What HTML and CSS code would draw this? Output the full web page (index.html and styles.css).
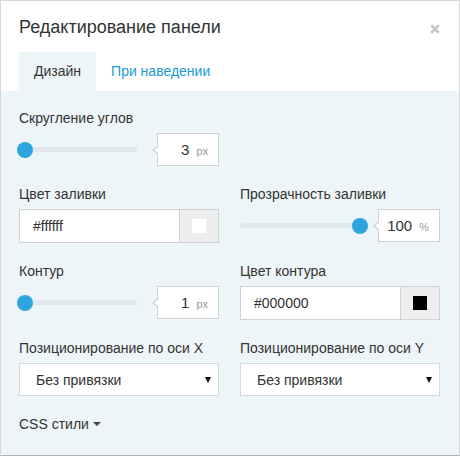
FILE: index.html
```html
<!DOCTYPE html>
<html lang="ru">
<head>
<meta charset="utf-8">
<title>Редактирование панели</title>
<link rel="stylesheet" href="styles.css">
</head>
<body>
<div class="panel">
  <div class="header">
    <h1 class="title">Редактирование панели</h1>
    <span class="close" aria-label="Закрыть">
      <svg width="10" height="10" viewBox="0 0 10 10"><path d="M1.2 1.2 L8.8 8.8 M8.8 1.2 L1.2 8.8" stroke="#c6c6c6" stroke-width="2.6" stroke-linecap="butt"/></svg>
    </span>
  </div>
  <div class="tabs">
    <div class="tab active">Дизайн</div>
    <div class="tab">При наведении</div>
  </div>
  <div class="body">
    <div class="grid">
      <div class="field">
        <div class="label">Скругление углов</div>
        <div class="range-row">
          <div class="slider"><div class="track"></div><div class="thumb at-min"></div></div>
          <div class="value"><span class="num">3</span><span class="unit">px</span></div>
        </div>
      </div>
      <div class="field"></div>

      <div class="field">
        <div class="label">Цвет заливки</div>
        <div class="color-input">
          <div class="color-text">#ffffff</div>
          <div class="swatch-cell"><span class="swatch white"></span></div>
        </div>
      </div>
      <div class="field">
        <div class="label">Прозрачность заливки</div>
        <div class="range-row">
          <div class="slider"><div class="track"></div><div class="thumb at-max"></div></div>
          <div class="value"><span class="num">100</span><span class="unit">%</span></div>
        </div>
      </div>

      <div class="field">
        <div class="label">Контур</div>
        <div class="range-row">
          <div class="slider"><div class="track"></div><div class="thumb at-min"></div></div>
          <div class="value"><span class="num">1</span><span class="unit">px</span></div>
        </div>
      </div>
      <div class="field">
        <div class="label">Цвет контура</div>
        <div class="color-input">
          <div class="color-text">#000000</div>
          <div class="swatch-cell"><span class="swatch black"></span></div>
        </div>
      </div>

      <div class="field">
        <div class="label">Позиционирование по оси X</div>
        <div class="select"><span>Без привязки</span><span class="arrow"></span></div>
      </div>
      <div class="field">
        <div class="label">Позиционирование по оси Y</div>
        <div class="select"><span>Без привязки</span><span class="arrow"></span></div>
      </div>
    </div>
    <div class="css-toggle">CSS стили <span class="caret"></span></div>
  </div>
</div>
</body>
</html>
```

FILE: styles.css
```css
* { box-sizing: border-box; }

html, body {
  margin: 0;
  padding: 0;
  background: #ffffff;
}

body {
  font-family: "Liberation Sans", Arial, sans-serif;
  color: #333333;
}

.panel {
  width: 460px;
  height: 456px;
  border: 1px solid #d3d7d9;
  border-bottom-color: #b0b4b6;
  display: flex;
  flex-direction: column;
  background: #ffffff;
}

.header {
  display: flex;
  align-items: flex-start;
  justify-content: space-between;
  padding: 14px 18px 0 18px;
}

.title {
  margin: 0;
  font-size: 18px;
  line-height: 24px;
  font-weight: normal;
  color: #333333;
}

.close {
  display: flex;
  margin-top: 9px;
  margin-right: 1px;
}

.tabs {
  display: flex;
  margin-top: 13px;
  padding: 0 18px;
  height: 39px;
}

.tab {
  padding: 0 15px;
  font-size: 14px;
  line-height: 39px;
  color: #1a9ad6;
  background: #ffffff;
}

.tab.active {
  color: #333333;
  background: #eef5f8;
}

.body {
  flex: 1;
  background: #eef5f8;
  padding: 17px 18px 0 18px;
}

.grid {
  display: grid;
  grid-template-columns: 200px 200px;
  column-gap: 21px;
  row-gap: 18px;
}

.label {
  font-size: 14px;
  line-height: 20px;
  color: #333333;
  margin-bottom: 5px;
  white-space: nowrap;
}

.range-row {
  display: flex;
  align-items: center;
  height: 33px;
}

.slider {
  position: relative;
  flex: 1;
  height: 16px;
  display: flex;
  align-items: center;
  margin-right: 10px;
}

.track {
  width: 118px;
  height: 5px;
  border-radius: 3px;
  background: #e2e9ec;
}

.thumb {
  position: absolute;
  top: 0;
  width: 16px;
  height: 16px;
  border-radius: 50%;
  background: #2ea5df;
}

.thumb.at-min { left: -2px; }
.thumb.at-max { right: 0; }

.value {
  position: relative;
  width: 62px;
  height: 33px;
  background: #ffffff;
  border: 1px solid #cfd3d5;
  display: flex;
  justify-content: flex-end;
  align-items: baseline;
  padding: 7px 10px 0 0;
}

.value::before,
.value::after {
  content: "";
  position: absolute;
  top: 50%;
  width: 0;
  height: 0;
  border-style: solid;
  border-color: transparent;
}

.value::before {
  left: -6px;
  margin-top: -5px;
  border-width: 5px 6px 5px 0;
  border-right-color: #cfd3d5;
}

.value::after {
  left: -4px;
  margin-top: -4px;
  border-width: 4px 5px 4px 0;
  border-right-color: #ffffff;
}

.num {
  font-size: 15px;
  color: #333333;
}

.unit {
  font-size: 11px;
  color: #999999;
  margin-left: 7px;
}

.color-input {
  display: flex;
  height: 34px;
  border: 1px solid #cfd3d5;
  background: #ffffff;
}

.color-text {
  flex: 1;
  font-size: 14px;
  line-height: 32px;
  padding-left: 13px;
  color: #333333;
}

.swatch-cell {
  width: 39px;
  border-left: 1px solid #cfd3d5;
  background: #eeeeee;
  display: flex;
  align-items: center;
  justify-content: center;
}

.swatch {
  width: 14px;
  height: 14px;
}

.swatch.white { background: #ffffff; }
.swatch.black { background: #000000; }

.select {
  height: 33px;
  border: 1px solid #d6d9db;
  background: #ffffff;
  display: flex;
  align-items: center;
  justify-content: space-between;
  padding: 0 7px 0 16px;
  font-size: 14px;
  color: #333333;
}

.arrow {
  width: 0;
  height: 0;
  border-left: 3px solid transparent;
  border-right: 3px solid transparent;
  border-top: 6px solid #111111;
}

.css-toggle {
  margin-top: 18px;
  font-size: 14px;
  line-height: 20px;
  color: #333333;
  display: flex;
  align-items: center;
}

.caret {
  display: inline-block;
  margin-left: 4px;
  width: 0;
  height: 0;
  border-left: 4px solid transparent;
  border-right: 4px solid transparent;
  border-top: 4px solid #444444;
}
```
